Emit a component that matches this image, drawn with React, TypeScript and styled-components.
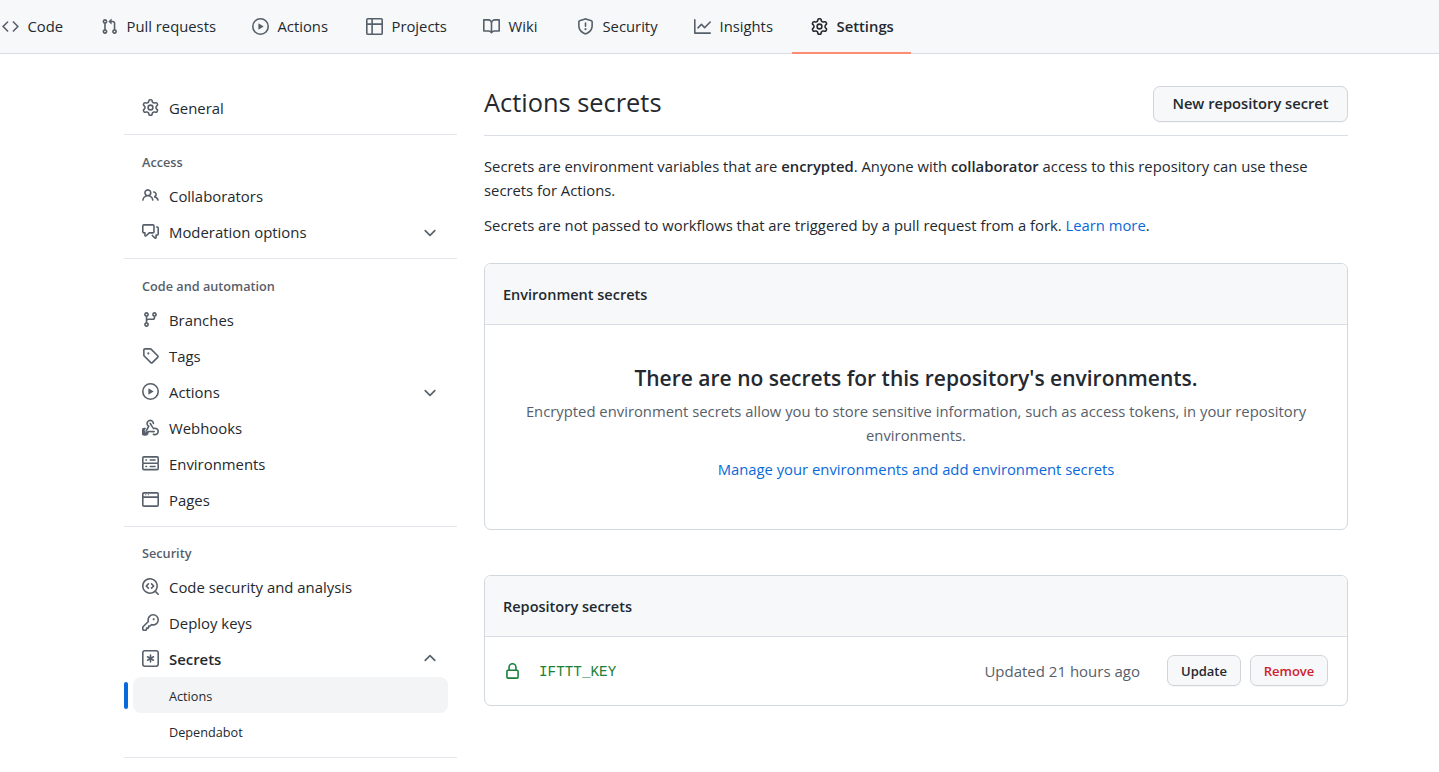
import React from "react";
import styled, { createGlobalStyle } from "styled-components";

const PATHS: Record<string, string> = {
  code: "M4.72 3.22a.75.75 0 011.06 1.06L2.06 8l3.72 3.72a.75.75 0 11-1.06 1.06L.47 8.53a.75.75 0 010-1.06l4.25-4.25zm6.56 0a.75.75 0 10-1.06 1.06L13.94 8l-3.72 3.72a.75.75 0 101.06 1.06l4.25-4.25a.75.75 0 000-1.06l-4.25-4.25z",
  pull: "M7.177 3.073L9.573.677A.25.25 0 0110 .854v4.792a.25.25 0 01-.427.177L7.177 3.427a.25.25 0 010-.354zM3.75 2.5a.75.75 0 100 1.5.75.75 0 000-1.5zm-2.25.75a2.25 2.25 0 113 2.122v5.256a2.251 2.251 0 11-1.5 0V5.372A2.25 2.25 0 011.5 3.25zM11 2.5h-1V4h1a1 1 0 011 1v5.628a2.251 2.251 0 101.5 0V5A2.5 2.5 0 0011 2.5zm1 10.25a.75.75 0 111.5 0 .75.75 0 01-1.5 0zM3.75 12a.75.75 0 100 1.5.75.75 0 000-1.5z",
  play: "M1.5 8a6.5 6.5 0 1113 0 6.5 6.5 0 01-13 0zM8 0a8 8 0 100 16A8 8 0 008 0zM6.379 5.227A.25.25 0 006 5.442v5.117a.25.25 0 00.379.214l4.264-2.559a.25.25 0 000-.428L6.379 5.227z",
  table: "M0 1.75C0 .784.784 0 1.75 0h12.5C15.216 0 16 .784 16 1.75v12.5A1.75 1.75 0 0114.25 16H1.75A1.75 1.75 0 010 14.25V1.75zM1.5 6.5v7.75c0 .138.112.25.25.25H5v-8H1.5zM5 5H1.5V1.75a.25.25 0 01.25-.25H5V5zm1.5 1.5v8h7.75a.25.25 0 00.25-.25V6.5h-8zm8-1.5h-8V1.5h7.75a.25.25 0 01.25.25V5z",
  book: "M0 1.75A.75.75 0 01.75 1h4.253c1.227 0 2.317.59 3 1.501A3.744 3.744 0 0111.006 1h4.245a.75.75 0 01.75.75v10.5a.75.75 0 01-.75.75h-4.507a2.25 2.25 0 00-1.591.659l-.622.621a.75.75 0 01-1.06 0l-.622-.621A2.25 2.25 0 005.258 13H.75a.75.75 0 01-.75-.75V1.75zm8.755 3a2.25 2.25 0 012.25-2.25H14.5v9h-3.757c-.71 0-1.4.201-1.992.572l.004-7.322zm-1.504 7.324l.004-5.073-.002-2.253A2.25 2.25 0 005.003 2.5H1.5v9h3.757a3.75 3.75 0 011.994.574z",
  shield: "M7.467.133a1.75 1.75 0 011.066 0l5.25 1.68A1.75 1.75 0 0115 3.48V7c0 1.566-.32 3.182-1.303 4.682-.983 1.498-2.585 2.813-5.032 3.855a1.7 1.7 0 01-1.33 0c-2.447-1.042-4.049-2.357-5.032-3.855C1.32 10.182 1 8.566 1 7V3.48a1.75 1.75 0 011.217-1.667l5.25-1.68zm.61 1.429a.25.25 0 00-.153 0l-5.25 1.68a.25.25 0 00-.174.238V7c0 1.358.275 2.666 1.057 3.86.784 1.194 2.121 2.34 4.366 3.297a.2.2 0 00.154 0c2.245-.956 3.582-2.104 4.366-3.298C13.225 9.666 13.5 8.36 13.5 7V3.48a.25.25 0 00-.174-.237l-5.25-1.68zM9 10.5a1 1 0 11-2 0 1 1 0 012 0zm-.25-5.75a.75.75 0 10-1.5 0v3a.75.75 0 001.5 0v-3z",
  graph: "M1.5 1.75a.75.75 0 00-1.5 0v12.5c0 .414.336.75.75.75h14.5a.75.75 0 000-1.5H1.5V1.75zm14.28 2.53a.75.75 0 00-1.06-1.06L10 7.94 7.53 5.47a.75.75 0 00-1.06 0L3.22 8.72a.75.75 0 001.06 1.06L7 7.06l2.47 2.47a.75.75 0 001.06 0l5.25-5.25z",
  gear: "M7.429 1.525a6.593 6.593 0 011.142 0c.036.003.108.036.137.146l.289 1.105c.147.56.55.967.997 1.189.174.086.341.183.501.29.417.278.97.423 1.53.27l1.102-.303c.11-.03.175.016.195.046.219.31.41.641.573.989.014.031.022.11-.059.19l-.815.806c-.411.406-.562.957-.53 1.456a4.588 4.588 0 010 .582c-.032.499.119 1.05.53 1.456l.815.806c.08.08.073.159.059.19a6.494 6.494 0 01-.573.99c-.02.029-.086.074-.195.045l-1.103-.303c-.559-.153-1.112-.008-1.529.27-.16.107-.327.204-.5.29-.449.222-.851.628-.998 1.189l-.289 1.105c-.029.11-.101.143-.137.146a6.613 6.613 0 01-1.142 0c-.036-.003-.108-.037-.137-.146l-.289-1.105c-.147-.56-.55-.967-.997-1.189a4.502 4.502 0 01-.501-.29c-.417-.278-.97-.423-1.53-.27l-1.102.303c-.11.03-.175-.016-.195-.046a6.492 6.492 0 01-.573-.989c-.014-.031-.022-.11.059-.19l.815-.806c.411-.406.562-.957.53-1.456a4.587 4.587 0 010-.582c.032-.499-.119-1.05-.53-1.456l-.815-.806c-.08-.08-.073-.159-.059-.19a6.44 6.44 0 01.573-.99c.02-.029.086-.075.195-.045l1.103.303c.559.153 1.112.008 1.529-.27.16-.107.327-.204.5-.29.449-.222.851-.628.998-1.189l.289-1.105c.029-.11.101-.143.137-.146zM8 0c-.236 0-.47.01-.701.03-.743.065-1.29.615-1.458 1.261l-.29 1.106c-.017.066-.078.158-.211.224a5.994 5.994 0 00-.668.386c-.123.082-.233.09-.3.071L3.27 2.776c-.644-.177-1.392.02-1.82.63a7.977 7.977 0 00-.704 1.217c-.315.675-.111 1.422.363 1.891l.815.806c.05.048.098.147.088.294a6.084 6.084 0 000 .772c.01.147-.038.246-.088.294l-.815.806c-.474.469-.678 1.216-.363 1.891.2.428.436.835.704 1.218.428.609 1.176.806 1.82.63l1.103-.303c.066-.019.176-.011.299.071.213.143.436.272.668.386.133.066.194.158.212.224l.289 1.106c.169.646.715 1.196 1.458 1.26a8.094 8.094 0 001.402 0c.743-.064 1.29-.614 1.458-1.26l.29-1.106c.017-.066.078-.158.211-.224a5.98 5.98 0 00.668-.386c.123-.082.233-.09.3-.071l1.102.302c.644.177 1.392-.02 1.82-.63.268-.382.505-.789.704-1.217.315-.675.111-1.422-.364-1.891l-.814-.806c-.05-.048-.098-.147-.088-.294a6.1 6.1 0 000-.772c-.01-.147.039-.246.088-.294l.814-.806c.475-.469.679-1.216.364-1.891a7.992 7.992 0 00-.704-1.218c-.428-.609-1.176-.806-1.82-.63l-1.103.303c-.066.019-.176.011-.299-.071a5.991 5.991 0 00-.668-.386c-.133-.066-.194-.158-.212-.224L10.16 1.29C9.99.645 9.444.095 8.701.031A8.094 8.094 0 008 0zm1.5 8a1.5 1.5 0 11-3 0 1.5 1.5 0 013 0zM11 8a3 3 0 11-6 0 3 3 0 016 0z",
  people: "M5.5 3.5a2 2 0 100 4 2 2 0 000-4zM2 5.5a3.5 3.5 0 115.898 2.549 5.507 5.507 0 013.034 4.084.75.75 0 11-1.482.235 4.001 4.001 0 00-7.9 0 .75.75 0 01-1.482-.236A5.507 5.507 0 013.102 8.05 3.49 3.49 0 012 5.5zM11 4a.75.75 0 100 1.5 1.5 1.5 0 01.666 2.844.75.75 0 00-.416.672v.352a.75.75 0 00.574.73c1.2.289 2.162 1.2 2.522 2.372a.75.75 0 101.434-.44 5.01 5.01 0 00-2.56-3.012A3 3 0 0011 4z",
  discussion: "M1.5 2.75a.25.25 0 01.25-.25h8.5a.25.25 0 01.25.25v5.5a.25.25 0 01-.25.25h-3.5a.75.75 0 00-.53.22L3.5 11.44V9.25a.75.75 0 00-.75-.75h-1a.25.25 0 01-.25-.25v-5.5zM1.75 1A1.75 1.75 0 000 2.75v5.5C0 9.216.784 10 1.75 10H2v1.543a1.457 1.457 0 002.487 1.03L7.061 10h3.189A1.75 1.75 0 0012 8.25v-5.5A1.75 1.75 0 0010.25 1h-8.5zM14.5 4.75a.25.25 0 00-.25-.25h-.5a.75.75 0 110-1.5h.5c.966 0 1.75.784 1.75 1.75v5.5A1.75 1.75 0 0114.25 12H14v1.543a1.457 1.457 0 01-2.487 1.03L9.22 12.28a.75.75 0 111.06-1.06l2.22 2.22v-2.19a.75.75 0 01.75-.75h1a.25.25 0 00.25-.25v-5.5z",
  down: "M12.78 6.22a.75.75 0 010 1.06l-4.25 4.25a.75.75 0 01-1.06 0L3.22 7.28a.75.75 0 011.06-1.06L8 9.94l3.72-3.72a.75.75 0 011.06 0z",
  up: "M3.22 9.78a.75.75 0 010-1.06l4.25-4.25a.75.75 0 011.06 0l4.25 4.25a.75.75 0 01-1.06 1.06L8 6.06 4.28 9.78a.75.75 0 01-1.06 0z",
  branch: "M11.75 2.5a.75.75 0 100 1.5.75.75 0 000-1.5zm-2.25.75a2.25 2.25 0 113 2.122V6A2.5 2.5 0 0110 8.5H6a1 1 0 00-1 1v1.128a2.251 2.251 0 11-1.5 0V5.372a2.25 2.25 0 111.5 0v1.836A2.492 2.492 0 016 7h4a1 1 0 001-1v-.628A2.25 2.25 0 019.5 3.25zM4.25 12a.75.75 0 100 1.5.75.75 0 000-1.5zM3.5 3.25a.75.75 0 111.5 0 .75.75 0 01-1.5 0z",
  tag: "M2.5 7.775V2.75a.25.25 0 01.25-.25h5.025a.25.25 0 01.177.073l6.25 6.25a.25.25 0 010 .354l-5.025 5.025a.25.25 0 01-.354 0l-6.25-6.25a.25.25 0 01-.073-.177zm-1.5 0V2.75C1 1.784 1.784 1 2.75 1h5.025c.464 0 .91.184 1.238.513l6.25 6.25a1.75 1.75 0 010 2.474l-5.026 5.026a1.75 1.75 0 01-2.474 0l-6.25-6.25A1.75 1.75 0 011 7.775zM6 5a1 1 0 100 2 1 1 0 000-2z",
  webhook: "M5.5 4.25a2.25 2.25 0 014.5 0 .75.75 0 001.5 0 3.75 3.75 0 10-6.14 2.889l-2.272 4.258a.75.75 0 001.324.706L7 7.25a.75.75 0 00-.309-1.015A2.25 2.25 0 015.5 4.25zM7.364 3.607a.75.75 0 011.03.257l2.608 4.349a3.75 3.75 0 11-.628 6.785.75.75 0 01.61-1.37 2.25 2.25 0 10.329-3.98.75.75 0 01-1.03-.256L7.107 4.636a.75.75 0 01.257-1.03zM2.5 11.25c0-.714.332-1.35.852-1.762a.75.75 0 10-.93-1.177 3.75 3.75 0 104.016 4.2l4.987.09a.75.75 0 10.027-1.5l-5.75-.104a.75.75 0 00-.763.75A2.25 2.25 0 012.5 11.25z",
  server: "M1.75 1A1.75 1.75 0 000 2.75v4c0 .372.116.717.314 1a1.742 1.742 0 00-.314 1v4c0 .966.784 1.75 1.75 1.75h12.5A1.75 1.75 0 0016 12.75v-4c0-.372-.116-.717-.314-1 .198-.283.314-.628.314-1v-4A1.75 1.75 0 0014.25 1H1.75zm0 7.5a.25.25 0 00-.25.25v4c0 .138.112.25.25.25h12.5a.25.25 0 00.25-.25v-4a.25.25 0 00-.25-.25H1.75zM1.5 2.75a.25.25 0 01.25-.25h12.5a.25.25 0 01.25.25v4a.25.25 0 01-.25.25H1.75a.25.25 0 01-.25-.25v-4zm5.5 2A.75.75 0 017.75 4h4.5a.75.75 0 010 1.5h-4.5A.75.75 0 017 4.75zM7.75 10a.75.75 0 000 1.5h4.5a.75.75 0 000-1.5h-4.5zM3 4.75A.75.75 0 013.75 4h.5a.75.75 0 010 1.5h-.5A.75.75 0 013 4.75zM3.75 10a.75.75 0 000 1.5h.5a.75.75 0 000-1.5h-.5z",
  browser: "M0 2.75C0 1.784.784 1 1.75 1h12.5c.966 0 1.75.784 1.75 1.75v10.5A1.75 1.75 0 0114.25 15H1.75A1.75 1.75 0 010 13.25V2.75zm1.75-.25a.25.25 0 00-.25.25V5h13V2.75a.25.25 0 00-.25-.25H1.75zm12.75 4H1.5v6.75c0 .138.112.25.25.25h12.5a.25.25 0 00.25-.25V6.5zM3 3h1v1H3V3zm2.5 0h1v1h-1V3z",
  codescan: "M8.47 4.97a.75.75 0 000 1.06L9.94 7.5 8.47 8.97a.75.75 0 101.06 1.06l2-2a.75.75 0 000-1.06l-2-2a.75.75 0 00-1.06 0zM6.53 6.03a.75.75 0 00-1.06-1.06l-2 2a.75.75 0 000 1.06l2 2a.75.75 0 101.06-1.06L5.06 7.5l1.47-1.47zM12.246 13.307a7.5 7.5 0 111.06-1.06l2.474 2.473a.75.75 0 11-1.06 1.06l-2.474-2.473zM1.5 7.5a6 6 0 1110.386 4.094.75.75 0 00-.292.293A6 6 0 011.5 7.5z",
  key: "M6.5 5.5a4 4 0 112.731 3.795.75.75 0 00-.768.18L7.44 10.5H6.25a.75.75 0 00-.75.75v1.19l-.06.06H4.25a.75.75 0 00-.75.75v1.19l-.06.06H1.75a.25.25 0 01-.25-.25v-1.69l5.024-5.023a.75.75 0 00.181-.768A3.995 3.995 0 016.5 5.5zm4-5.5a5.5 5.5 0 00-5.348 6.788L.22 11.72a.75.75 0 00-.22.53v2C0 15.216.784 16 1.75 16h2a.75.75 0 00.53-.22l.5-.5a.75.75 0 00.22-.53V14h.75a.75.75 0 00.53-.22l.5-.5a.75.75 0 00.22-.53V12h.75a.75.75 0 00.53-.22l.932-.932A5.5 5.5 0 1010.5 0zm.5 6a1 1 0 100-2 1 1 0 000 2z",
  asterisk: "M0 2.75A2.75 2.75 0 012.75 0h10.5A2.75 2.75 0 0116 2.75v10.5A2.75 2.75 0 0113.25 16H2.75A2.75 2.75 0 010 13.25V2.75zm2.75-1.25c-.69 0-1.25.56-1.25 1.25v10.5c0 .69.56 1.25 1.25 1.25h10.5c.69 0 1.25-.56 1.25-1.25V2.75c0-.69-.56-1.25-1.25-1.25H2.75zM8 4a.75.75 0 01.75.75V6.7l1.69-.975a.75.75 0 01.75 1.3L9.5 8l1.69.976a.75.75 0 01-.75 1.298L8.75 9.3v1.951a.75.75 0 01-1.5 0V9.299l-1.69.976a.75.75 0 01-.75-1.3L6.5 8l-1.69-.975a.75.75 0 01.75-1.3l1.69.976V4.75A.75.75 0 018 4z",
  lock: "M4 4v2h-.25A1.75 1.75 0 002 7.75v5.5c0 .966.784 1.75 1.75 1.75h8.5A1.75 1.75 0 0014 13.25v-5.5A1.75 1.75 0 0012.25 6H12V4a4 4 0 10-8 0zm6.5 2V4a2.5 2.5 0 00-5 0v2h5zM12 7.5h.25a.25.25 0 01.25.25v5.5a.25.25 0 01-.25.25h-8.5a.25.25 0 01-.25-.25v-5.5a.25.25 0 01.25-.25H12z",
};

const Octicon = ({ name, size = 17 }: { name: string; size?: number }) => (
  <svg width={size} height={size} viewBox="0 0 16 16" fill="currentColor">
    <path fillRule="evenodd" d={PATHS[name]} />
  </svg>
);

const Global = createGlobalStyle`
  html, body { margin: 0; padding: 0; background: #fff; overflow: hidden; }
  body { font-family: "Open Sans", "Noto Sans", "Liberation Sans", sans-serif; font-size: 14.82px; color: #24292f; }
  * { box-sizing: border-box; }
`;

const Page = styled.div`width: 1439px; height: 772px; overflow: hidden;`;

const TabBar = styled.nav`
  display: flex; height: 54px; background: #f6f8fa; border-bottom: 1px solid #d8dee4;
`;
const Tab = styled.a<{ $active?: boolean; $w: number }>`
  display: flex; align-items: center; gap: 8.5px; height: 54px; width: ${p => p.$w}px;
  flex: none; padding-left: 19px; color: #24292f; font-size: 14.8px;
  font-weight: ${p => (p.$active ? 600 : 400)};
  border-bottom: 2px solid ${p => (p.$active ? "#fd8c73" : "transparent")};
  svg { color: ${p => (p.$active ? "#24292f" : "#57606a")}; flex: none; }
`;
const FirstTab = styled(Tab)`margin-left: -17px;`;

const Main = styled.div`display: flex; margin-left: 124px; width: 1224px; gap: 27px;`;
const Side = styled.aside`width: 333px; flex: none; padding-top: 36px;`;
const Divider = styled.hr`margin: 8px 0 0; border: 0; height: 1px; background: #e4e8ec;`;
const SideHead = styled.h3<{ $compact?: boolean }>`
  margin: 0; height: ${p => (p.$compact ? 42 : 43)}px; padding-top: ${p => (p.$compact ? 15 : 16)}px;
  padding-left: 18px; line-height: 22px;
  font-size: 12.7px; font-weight: 600; color: #57606a;
`;
const SideItem = styled.a<{ $strong?: boolean }>`
  display: flex; align-items: center; height: 36px; margin: 0 9px; padding: 0 9px 1px 9px; gap: 10px;
  color: #24292f; font-size: 14.9px; font-weight: ${p => (p.$strong ? 600 : 400)};
  svg { color: #57606a; flex: none; }
`;
const Chevron = styled.span`margin-left: auto; display: flex;`;
const SubItem = styled.a<{ $active?: boolean }>`
  position: relative; display: flex; align-items: center; height: 36px; margin: 0 9px; padding: 1px 0 0 36px;
  font-size: 12.7px; color: #24292f; border-radius: 8px;
  background: ${p => (p.$active ? "#f3f4f6" : "transparent")};
  ${p => p.$active ? `&::before { content: ""; position: absolute; left: -9px; top: 5px; width: 4px; height: 27px; border-radius: 3px; background: #0969da; }` : ""}
`;

const Content = styled.main`width: 864px; flex: none; padding-top: 32px;`;
const Subhead = styled.div`
  display: flex; justify-content: space-between; align-items: center;
  height: 50px; padding-bottom: 13px; border-bottom: 1px solid #d8dee4;
`;
const Title = styled.h2`margin: 0 0 4px; font-size: 25.4px; font-weight: 400; color: #24292f;`;
const Button = styled.button<{ $danger?: boolean }>`
  font-family: inherit; font-weight: 600; color: ${p => (p.$danger ? "#cf222e" : "#24292f")};
  background: #f6f8fa; border: 1px solid #d1d5da; border-radius: 7px; padding: 0;
  box-shadow: 0 1px 0 rgba(27,31,36,.04);
`;
const BigButton = styled(Button)`width: 195px; height: 36px; font-size: 14.7px; padding-bottom: 2px;`;
const SmallButton = styled(Button)<{ $w: number }>`width: ${p => p.$w}px; height: 31px; font-size: 13px; padding-top: 2px;`;
const Para = styled.p<{ $top: number }>`margin: ${p => p.$top}px 0 0; line-height: 24px;`;
const Strong = styled.strong`font-weight: 600;`;
const Link = styled.a`color: #0969da;`;
const Box = styled.section<{ $top: number }>`
  margin-top: ${p => p.$top}px; border: 1px solid #d0d7de; border-radius: 7px; overflow: hidden;
`;
const BoxHead = styled.div`
  display: flex; align-items: center; height: 61px; padding: 0 18px; background: #f6f8fa;
  border-bottom: 1px solid #d8dee4; font-weight: 600; font-size: 14.5px;
`;
const Blank = styled.div`text-align: center; padding: 38px 36px 47px; height: 204px;`;
const BlankTitle = styled.h3`margin: 0 0 6px; font-size: 21px; line-height: 30px; font-weight: 600;`;
const BlankText = styled.p`margin: 0 0 12px; line-height: 24px; color: #57606a;`;
const SecretRow = styled.div`display: flex; align-items: center; height: 68px; padding: 0 19px;`;
const LockWrap = styled.span`display: flex; color: #1a7f37; margin-right: 18px;`;
const KeyName = styled.code`font-family: "Liberation Mono", monospace; font-size: 14.3px; color: #1a7f37; padding-top: 2px;`;
const Updated = styled.span`margin-left: auto; margin-right: 27px; color: #57606a; font-size: 15px;`;
const Actions = styled.div`display: flex; gap: 9px; margin-bottom: 2px;`;

const Down = () => <Chevron><Octicon name="down" size={18} /></Chevron>;

export default function App() {
  return (
    <Page>
      <Global />
      <TabBar>
        <FirstTab $w={99}><Octicon name="code" />Code</FirstTab>
        <Tab $w={151}><Octicon name="pull" />Pull requests</Tab>
        <Tab $w={114}><Octicon name="play" />Actions</Tab>
        <Tab $w={117}><Octicon name="table" />Projects</Tab>
        <Tab $w={94}><Octicon name="book" />Wiki</Tab>
        <Tab $w={117}><Octicon name="shield" />Security</Tab>
        <Tab $w={117}><Octicon name="graph" />Insights</Tab>
        <Tab $active $w={119}><Octicon name="gear" />Settings</Tab>
      </TabBar>
      <Main>
        <Side>
          <SideItem><Octicon name="gear" />General</SideItem>
          <Divider />
          <SideHead>Access</SideHead>
          <SideItem><Octicon name="people" />Collaborators</SideItem>
          <SideItem><Octicon name="discussion" />Moderation options<Down /></SideItem>
          <Divider />
          <SideHead>Code and automation</SideHead>
          <SideItem><Octicon name="branch" />Branches</SideItem>
          <SideItem><Octicon name="tag" />Tags</SideItem>
          <SideItem><Octicon name="play" />Actions<Down /></SideItem>
          <SideItem><Octicon name="webhook" />Webhooks</SideItem>
          <SideItem><Octicon name="server" />Environments</SideItem>
          <SideItem><Octicon name="browser" />Pages</SideItem>
          <Divider />
          <SideHead $compact>Security</SideHead>
          <SideItem><Octicon name="codescan" />Code security and analysis</SideItem>
          <SideItem><Octicon name="key" />Deploy keys</SideItem>
          <SideItem $strong><Octicon name="asterisk" />Secrets<Chevron><Octicon name="up" size={18} /></Chevron></SideItem>
          <SubItem $active>Actions</SubItem>
          <SubItem>Dependabot</SubItem>
          <Divider />
        </Side>
        <Content>
          <Subhead>
            <Title>Actions secrets</Title>
            <BigButton>New repository secret</BigButton>
          </Subhead>
          <Para $top={18}>Secrets are environment variables that are <Strong>encrypted</Strong>. Anyone with <Strong>collaborator</Strong> access to this repository can use these secrets for Actions.</Para>
          <Para $top={11}>Secrets are not passed to workflows that are triggered by a pull request from a fork. <Link>Learn more</Link>.</Para>
          <Box $top={26}>
            <BoxHead>Environment secrets</BoxHead>
            <Blank>
              <BlankTitle>There are no secrets for this repository's environments.</BlankTitle>
              <BlankText>Encrypted environment secrets allow you to store sensitive information, such as access tokens, in your repository environments.</BlankText>
              <Link>Manage your environments and add environment secrets</Link>
            </Blank>
          </Box>
          <Box $top={45}>
            <BoxHead>Repository secrets</BoxHead>
            <SecretRow>
              <LockWrap><Octicon name="lock" /></LockWrap>
              <KeyName>IFTTT_KEY</KeyName>
              <Updated>Updated 21 hours ago</Updated>
              <Actions>
                <SmallButton $w={74}>Update</SmallButton>
                <SmallButton $w={78} $danger>Remove</SmallButton>
              </Actions>
            </SecretRow>
          </Box>
        </Content>
      </Main>
    </Page>
  );
}
